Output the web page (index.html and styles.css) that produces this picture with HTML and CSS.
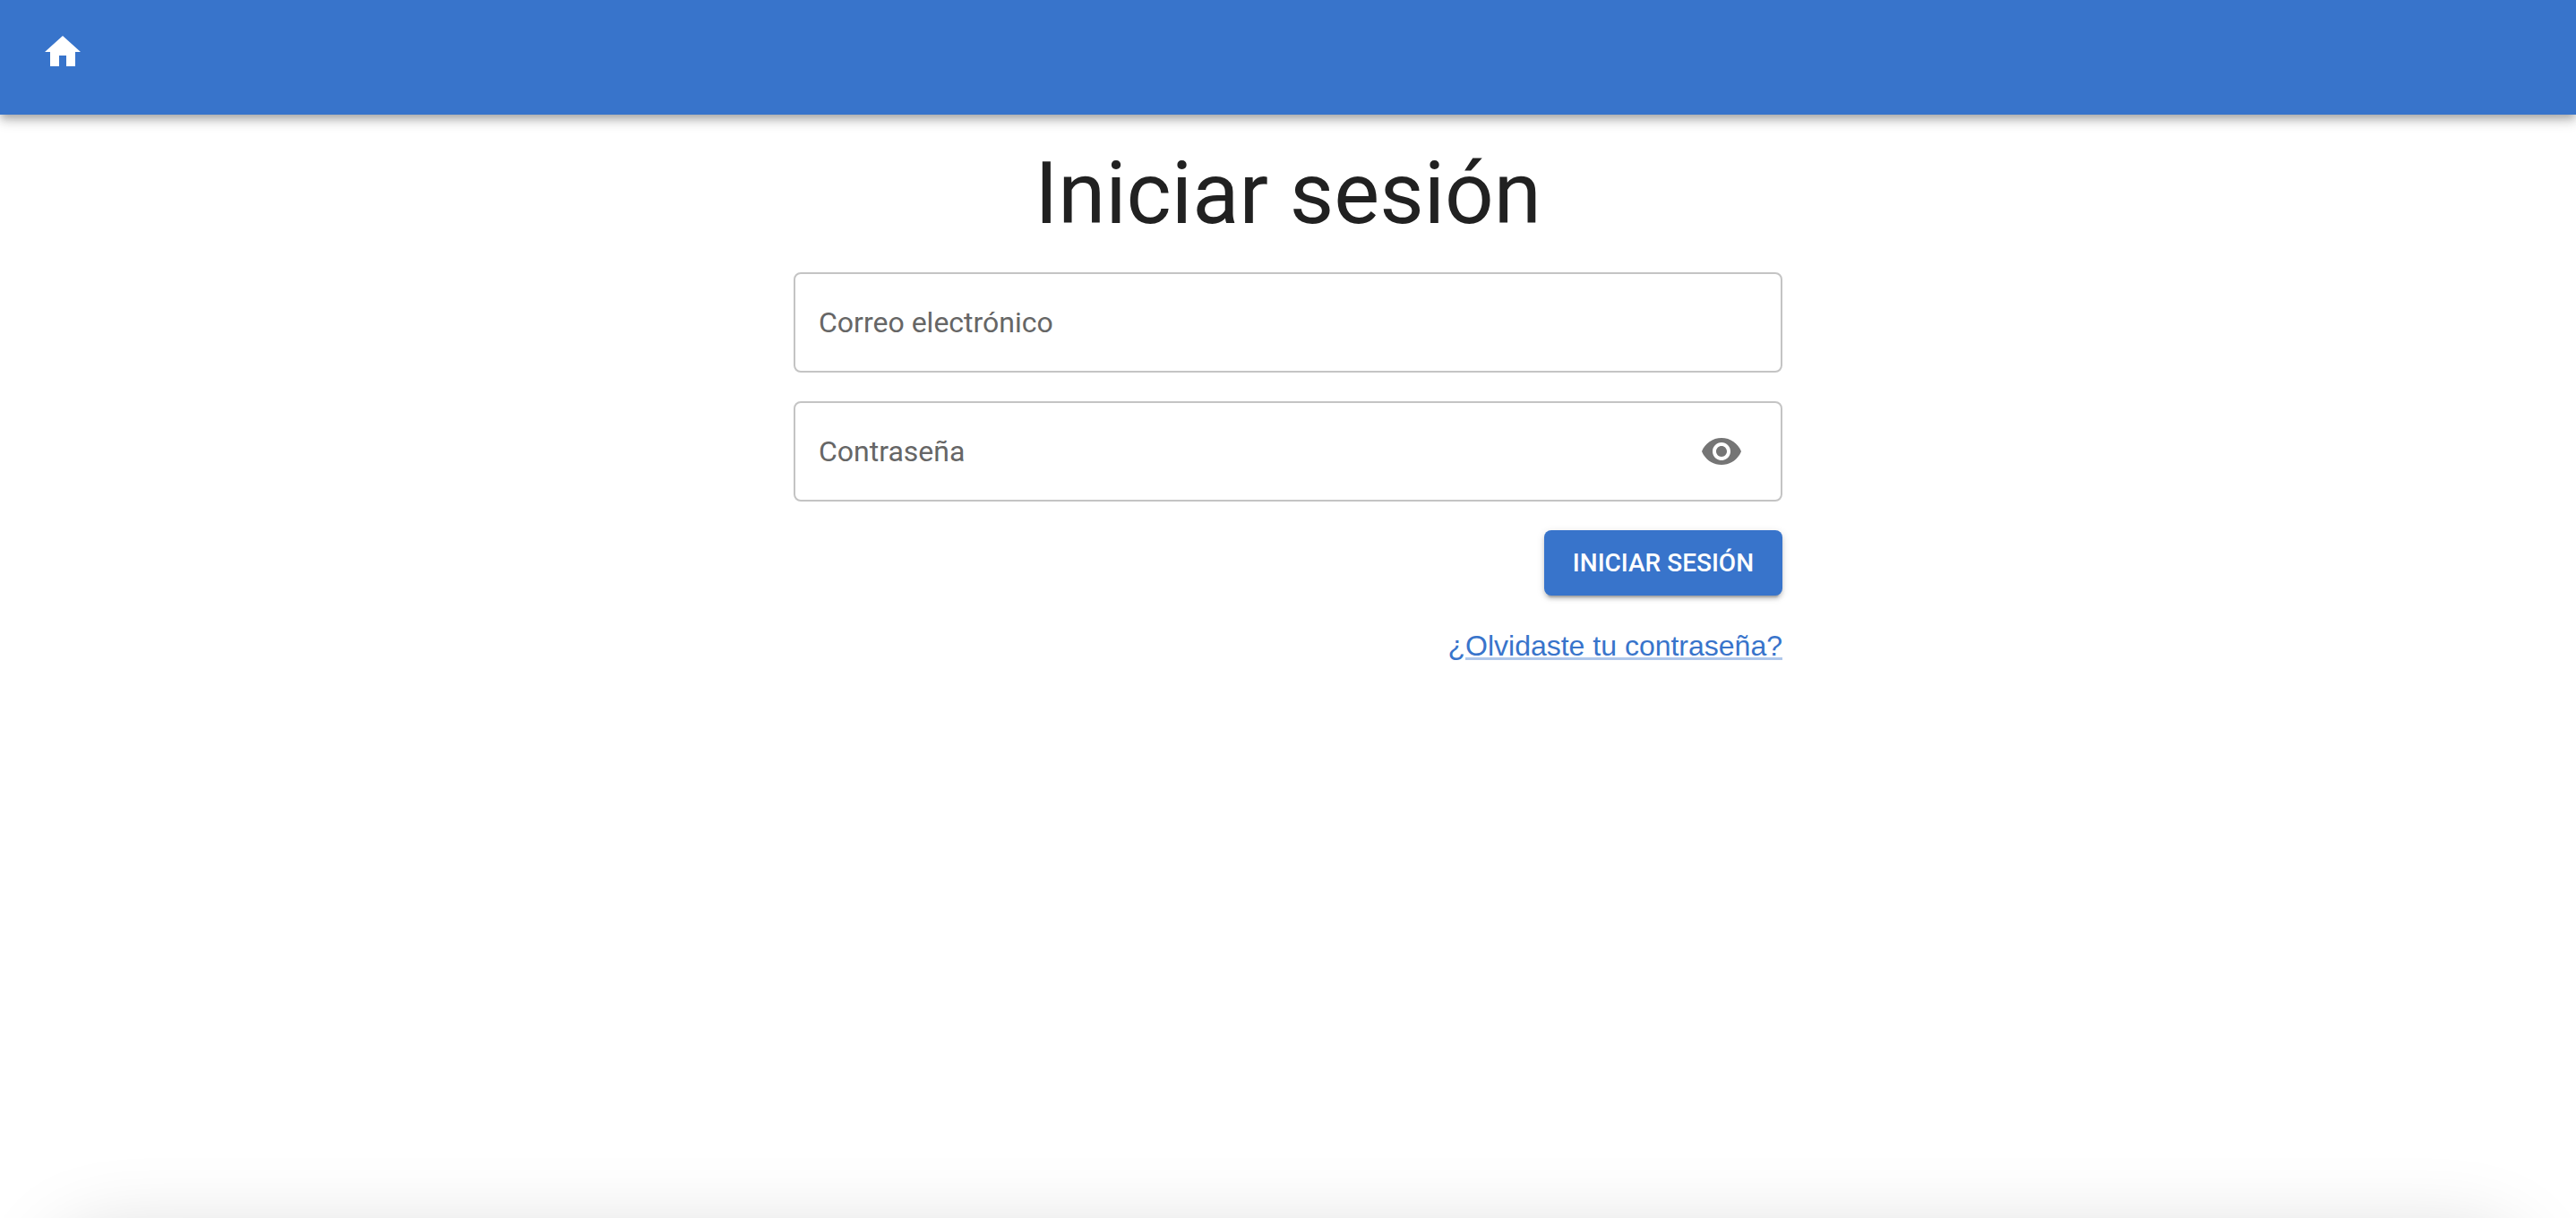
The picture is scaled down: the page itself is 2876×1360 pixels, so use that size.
FILE: index.html
```html
<!DOCTYPE html>
<html lang="es">
<head>
  <meta charset="utf-8">
  <meta name="viewport" content="width=device-width, initial-scale=1">
  <title>Iniciar sesión</title>
  <link rel="stylesheet" href="styles.css">
</head>
<body>
  <header class="app-bar">
    <a class="home-link" href="/" aria-label="Inicio">
      <svg class="icon" viewBox="0 0 24 24" aria-hidden="true"><path d="M10 20v-6h4v6h5v-8h3L12 3 2 12h3v8z"/></svg>
    </a>
  </header>

  <main class="content">
    <h1 class="title">Iniciar sesión</h1>
    <form class="login-form">
      <div class="field">
        <label class="field-label" for="email">Correo electrónico</label>
        <input class="field-input" id="email" type="email" placeholder=" " autocomplete="email">
      </div>
      <div class="field">
        <label class="field-label" for="password">Contraseña</label>
        <input class="field-input" id="password" type="password" placeholder=" " autocomplete="current-password">
        <button class="toggle" type="button" aria-label="Mostrar contraseña">
          <svg class="icon" viewBox="0 0 24 24" aria-hidden="true"><path d="M12 4.500C7 4.500 2.730 7.610 1 12c1.730 4.390 6 7.500 11 7.500s9.270-3.110 11-7.500c-1.730-4.390-6-7.500-11-7.500zM12 17c-2.760 0-5-2.240-5-5s2.240-5 5-5 5 2.240 5 5-2.240 5-5 5zm0-8c-1.660 0-3 1.340-3 3s1.340 3 3 3 3-1.340 3-3-1.340-3-3-3z"/></svg>
        </button>
      </div>
      <button class="submit" type="submit">INICIAR SESIÓN</button>
      <a class="forgot" href="#recuperar">¿Olvidaste tu contraseña?</a>
    </form>
  </main>
</body>
</html>
```
FILE: styles.css
```css
*,
*::before,
*::after {
  box-sizing: border-box;
}

body {
  margin: 0;
  min-height: 100vh;
  background: #fff;
  color: #212121;
  font-family: Roboto, sans-serif;
  font-size: 32px;
  line-height: 48px;
}

/* soft shadow rising from the bottom edge of the window */
body::after {
  content: "";
  position: fixed;
  top: 100%;
  left: 60px;
  right: 60px;
  height: 200px;
  border-radius: 60px;
  box-shadow: 0 20px 90px rgba(0, 0, 0, 0.17);
  pointer-events: none;
}

.icon {
  display: block;
  width: 48px;
  height: 48px;
  fill: currentColor;
}

.app-bar {
  display: flex;
  align-items: flex-start;
  min-height: 128px;
  padding: 10px 22px;
  background: #3874cb;
  color: #fff;
  box-shadow:
    0 4px 8px -2px rgba(0, 0, 0, 0.2),
    0 8px 10px 0 rgba(0, 0, 0, 0.14),
    0 2px 20px 0 rgba(0, 0, 0, 0.12);
}

.home-link {
  padding: 24px;
  color: inherit;
}

.content {
  width: 100%;
  max-width: 1104px;
  margin: 0 auto;
  padding: 32px 0;
}

.title {
  margin: 0 0 32px;
  font-size: 96px;
  font-weight: 400;
  line-height: 112px;
  text-align: center;
}

.login-form {
  display: flex;
  flex-direction: column;
  align-items: flex-end;
  gap: 32px;
}

.field {
  display: grid;
  grid-template-columns: 1fr auto;
  align-items: center;
  width: 100%;
  min-height: 112px;
  border: 2px solid #c4c4c4;
  border-radius: 8px;
}

.field:focus-within {
  border-color: #3874cb;
}

.field-label,
.field-input {
  grid-area: 1 / 1;
  padding: 0 26px;
}

.field-label {
  z-index: 1;
  color: #666;
  line-height: 46px;
  pointer-events: none;
}

.field:has(.field-input:focus) .field-label,
.field:has(.field-input:not(:placeholder-shown)) .field-label {
  align-self: start;
  font-size: 24px;
  line-height: 32px;
}

.field-input {
  width: 100%;
  height: 108px;
  border: 0;
  outline: 0;
  background: transparent;
  color: inherit;
  font: inherit;
}

.toggle {
  margin-right: 26px;
  padding: 16px;
  border: 0;
  background: transparent;
  color: #757575;
  cursor: pointer;
}

.submit {
  min-width: 266px;
  padding: 12px 32px;
  border: 0;
  border-radius: 8px;
  background: #3874cb;
  color: #fff;
  font-family: inherit;
  font-size: 28px;
  font-weight: 500;
  line-height: 49px;
  cursor: pointer;
  box-shadow:
    0 6px 2px -4px rgba(0, 0, 0, 0.2),
    0 4px 4px 0 rgba(0, 0, 0, 0.14),
    0 2px 10px 0 rgba(0, 0, 0, 0.12);
}

.forgot {
  color: #3874cb;
  font-family: Helvetica, "Liberation Sans", sans-serif;
  text-decoration-line: underline;
  text-decoration-color: rgba(56, 116, 203, 0.4);
  text-decoration-thickness: 3px;
  text-underline-offset: 2px;
}
```
